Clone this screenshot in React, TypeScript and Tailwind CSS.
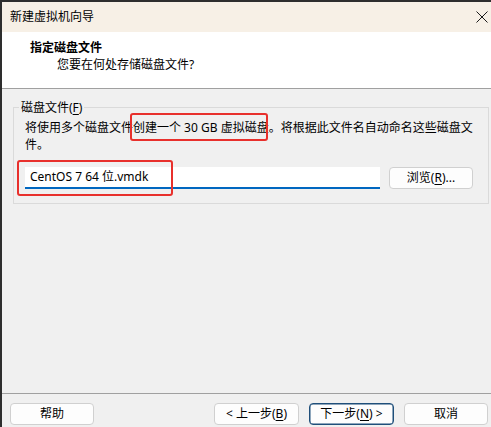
import React from 'react';

const font = { fontFamily: '"Noto Sans", "Noto Sans CJK SC", sans-serif' };

function WinButton({ children, primary, className = '' }: { children: React.ReactNode; primary?: boolean; className?: string }) {
  return (
    <button
      className={`h-[22px] rounded-[4px] bg-[#fdfdfd] text-[12px] leading-none text-black flex items-center justify-center ${
        primary ? 'border border-[#1f4f7a] shadow-[inset_0_0_0_0.5px_#1f4f7a]' : 'border border-[#d0d0d0]'
      } ${className}`}
    >
      {children}
    </button>
  );
}

export default function App() {
  return (
    <div
      className="w-[491px] h-[427px] flex flex-col bg-[#f0f0f0] border-t-2 border-l-2 border-[#2e2e2e] overflow-hidden text-black"
      style={font}
    >
      {/* title bar */}
      <div className="h-[30px] shrink-0 bg-[#f7f0e6] flex items-center justify-between pl-[8px] pr-[3px]">
        <span className="text-[12px] leading-none">新建虚拟机向导</span>
        <svg width="12" height="12" viewBox="0 0 12 12">
          <path d="M0.5 0.5 L11.5 11.5 M11.5 0.5 L0.5 11.5" stroke="#1a1a1a" strokeWidth="1" />
        </svg>
      </div>

      {/* header */}
      <div className="h-[56px] shrink-0 bg-white border-b border-[#a0a0a0] box-content pl-[28px]">
        <div className="pt-[8px] text-[12px] leading-[16px] font-bold">指定磁盘文件</div>
        <div className="pl-[27px] pt-[1px] text-[12px] leading-[16px]">您要在何处存储磁盘文件?</div>
      </div>

      {/* body */}
      <div className="flex-1 pt-[18px] pl-[11px] pr-[2px]">
        <div className="relative h-[97px] border border-[#dadada] pt-[11px] pl-[11px] pr-[15px]">
          <span className="absolute left-[5px] top-[-9px] px-[2px] bg-[#f0f0f0] text-[12px] leading-[17px]">
            磁盘文件(<span className="underline underline-offset-2">F</span>)
          </span>
          <div className="text-[12px] leading-[17px] whitespace-nowrap">
            将使用多个磁盘文件创建一个 30 GB 虚拟磁盘。将根据此文件名自动命名这些磁盘文
          </div>
          <div className="text-[12px] leading-[17px]">件。</div>
          <div className="mt-[14px] flex items-center gap-[9px]">
            <div className="w-[355px] h-[22px] bg-white border-b-2 border-[#0067c0] flex items-center pl-[5px] text-[12px] leading-none">
              CentOS 7 64 位.vmdk
            </div>
            <WinButton className="w-[84px]">
              浏览(<span className="underline underline-offset-2">R</span>)...
            </WinButton>
          </div>

          {/* annotation boxes */}
          <div className="absolute left-[116px] top-[5px] w-[138px] h-[28px] border-2 border-[#e8302c] rounded-[3px]" />
          <div className="absolute left-[3px] top-[52px] w-[156px] h-[36px] border-2 border-[#e8302c] rounded-[3px]" />
        </div>
      </div>

      {/* footer */}
      <div className="h-[34px] shrink-0 border-t border-[#a0a0a0] flex items-start pt-[9px] pl-[8px] pr-[3px]">
        <WinButton className="w-[84px]">帮助</WinButton>
        <div className="flex-1" />
        <div className="flex gap-[10px]">
          <WinButton className="w-[85px]">
            &lt; 上一步(<span className="underline underline-offset-2">B</span>)
          </WinButton>
          <WinButton primary className="w-[85px]">
            下一步(<span className="underline underline-offset-2">N</span>) &gt;
          </WinButton>
          <WinButton className="w-[84px]">取消</WinButton>
        </div>
      </div>
    </div>
  );
}
